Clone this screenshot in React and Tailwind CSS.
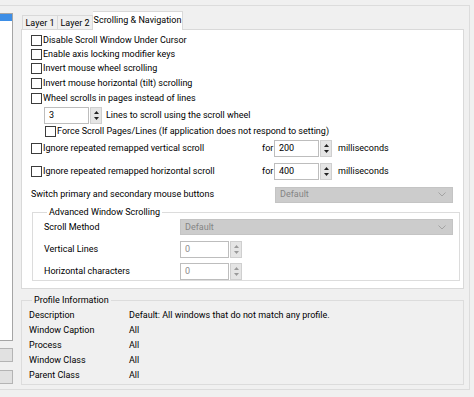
import React from "react";

const Check = () => (
  <span className="w-[11px] h-[11px] border border-[#3c3c3c] bg-white shrink-0" />
);

const Arrows = ({ disabled }) => (
  <div className="w-[12px] h-full ml-[1px] flex flex-col items-center justify-center gap-[3px] border border-[#cfcfcf] bg-[#e5e5e5]">
    <svg width="5" height="3" viewBox="0 0 5 3">
      <path d="M2.5 0 L5 3 L0 3 Z" fill={disabled ? "#9a9a9a" : "#222"} />
    </svg>
    <svg width="5" height="3" viewBox="0 0 5 3">
      <path d="M0 0 L5 0 L2.5 3 Z" fill={disabled ? "#9a9a9a" : "#222"} />
    </svg>
  </div>
);

const Spin = ({ value, disabled, wide }) => (
  <div className="flex h-[17px]">
    <div
      className={
        "h-full border border-[#bdbdbd] bg-white flex items-center pl-[4px] " +
        (wide ? "w-[49px] " : "w-[45px] ") +
        (disabled ? "text-[#8c8c8c]" : "text-black")
      }
    >
      {value}
    </div>
    <Arrows disabled={disabled} />
  </div>
);

const Dropdown = ({ w }) => (
  <div
    className={
      "h-[16px] bg-[#cccccc] border border-[#c4c4c4] flex items-center justify-between pl-[4px] pr-[6px] text-[#858585] " +
      w
    }
  >
    <span>Default</span>
    <svg width="8" height="5" viewBox="0 0 8 5">
      <path d="M0.5 0.5 L4 4 L7.5 0.5" fill="none" stroke="#a3a3a3" strokeWidth="1" />
    </svg>
  </div>
);

const CheckRow = ({ label, h }) => (
  <div className={"flex items-center gap-[1px] " + h}>
    <Check />
    <span>{label}</span>
  </div>
);

export default function App() {
  return (
    <div
      className="w-[474px] h-[397px] bg-[#f0f0f0] overflow-hidden pt-[5px] text-[9px] leading-[11px] text-black"
      style={{ fontFamily: "Roboto, 'Liberation Sans', sans-serif" }}
    >
      <div className="w-[470px] h-[385px] border-t border-r border-b border-[#dcdcdc] flex">
        {/* left column */}
        <div className="w-[13px] flex flex-col shrink-0">
          <div className="mt-[7px] h-[328px] bg-white border-y border-r border-[#a5a5a5]">
            <div className="h-[7px] bg-[#3d8ee6]" />
          </div>
          <div className="mt-[7px] h-[14px] bg-[#e1e1e1] border-y border-r border-[#b4b4b4]" />
          <div className="mt-[8px] h-[14px] bg-[#e1e1e1] border-y border-r border-[#b4b4b4]" />
        </div>

        {/* main column */}
        <div className="ml-[8px] w-[443px] flex flex-col">
          {/* tabs */}
          <div className="h-[24px] flex items-end pl-[1px]">
            <div className="w-[35px] h-[15px] border-t border-l border-[#d9d9d9] flex items-center justify-center">
              Layer 1
            </div>
            <div className="w-[36px] h-[15px] border-t border-l border-r border-[#d9d9d9] flex items-center justify-center">
              Layer 2
            </div>
            <div className="relative z-10 w-[90px] h-[19px] bg-white border-t border-r border-[#d9d9d9] flex items-start justify-center pt-[3px]">
              Scrolling &amp; Navigation
            </div>
          </div>

          {/* tab panel */}
          <div className="-mt-px h-[260px] bg-white border border-[#d9d9d9] pl-[9px] pt-[3px] flex flex-col">
            <CheckRow h="h-[14px]" label="Disable Scroll Window Under Cursor" />
            <CheckRow h="h-[14px]" label="Enable axis locking modifier keys" />
            <CheckRow h="h-[15px]" label="Invert mouse wheel scrolling" />
            <CheckRow h="h-[15px]" label="Invert mouse horizontal (tilt) scrolling" />
            <CheckRow h="h-[15px]" label="Wheel scrolls in pages instead of lines" />

            <div className="h-[18px] flex items-center pl-[13px] gap-[4px]">
              <Spin value="3" />
              <span>Lines to scroll using the scroll wheel</span>
            </div>
            <div className="h-[14px] flex items-center pl-[14px] gap-[1px]">
              <Check />
              <span>Force Scroll Pages/Lines (If application does not respond to setting)</span>
            </div>

            <div className="h-[20px] flex items-center">
              <div className="w-[231px] flex items-center gap-[1px]">
                <Check />
                <span>Ignore repeated remapped vertical scroll</span>
              </div>
              <span className="w-[12px]">for</span>
              <Spin value="200" />
              <span className="ml-[6px]">milliseconds</span>
            </div>
            <div className="mt-[3px] h-[20px] flex items-center">
              <div className="w-[231px] flex items-center gap-[1px]">
                <Check />
                <span>Ignore repeated remapped horizontal scroll</span>
              </div>
              <span className="w-[12px]">for</span>
              <Spin value="400" />
              <span className="ml-[6px]">milliseconds</span>
            </div>

            <div className="mt-[5px] h-[17px] flex items-center">
              <span className="w-[244px]">Switch primary and secondary mouse buttons</span>
              <Dropdown w="w-[178px]" />
            </div>

            <fieldset className="mt-[4px] ml-[1px] w-[428px] border border-[#dcdcdc] pl-[11px]">
              <legend className="ml-[3px] px-[2px]">Advanced Window Scrolling</legend>
              <div className="mt-[1px] h-[16px] flex items-center">
                <span className="w-[136px]">Scroll Method</span>
                <Dropdown w="w-[273px]" />
              </div>
              <div className="mt-[6px] h-[17px] flex items-center">
                <span className="w-[136px]">Vertical Lines</span>
                <Spin value="0" disabled wide />
              </div>
              <div className="mt-[5px] h-[17px] flex items-center">
                <span className="w-[136px]">Horizontal characters</span>
                <Spin value="0" disabled wide />
              </div>
            </fieldset>
          </div>

          {/* profile information */}
          <fieldset className="mt-[6px] w-[443px] border border-[#dcdcdc] pl-[7px] pt-[2px] pb-[1px]">
            <legend className="ml-[3px] px-[2px]">Profile Information</legend>
            {[
              ["Description", "Default: All windows that do not match any profile."],
              ["Window Caption", "All"],
              ["Process", "All"],
              ["Window Class", "All"],
              ["Parent Class", "All"],
            ].map(([k, v]) => (
              <div key={k} className="h-[15px] flex items-center">
                <span className="w-[100px]">{k}</span>
                <span>{v}</span>
              </div>
            ))}
          </fieldset>
        </div>
      </div>
    </div>
  );
}
